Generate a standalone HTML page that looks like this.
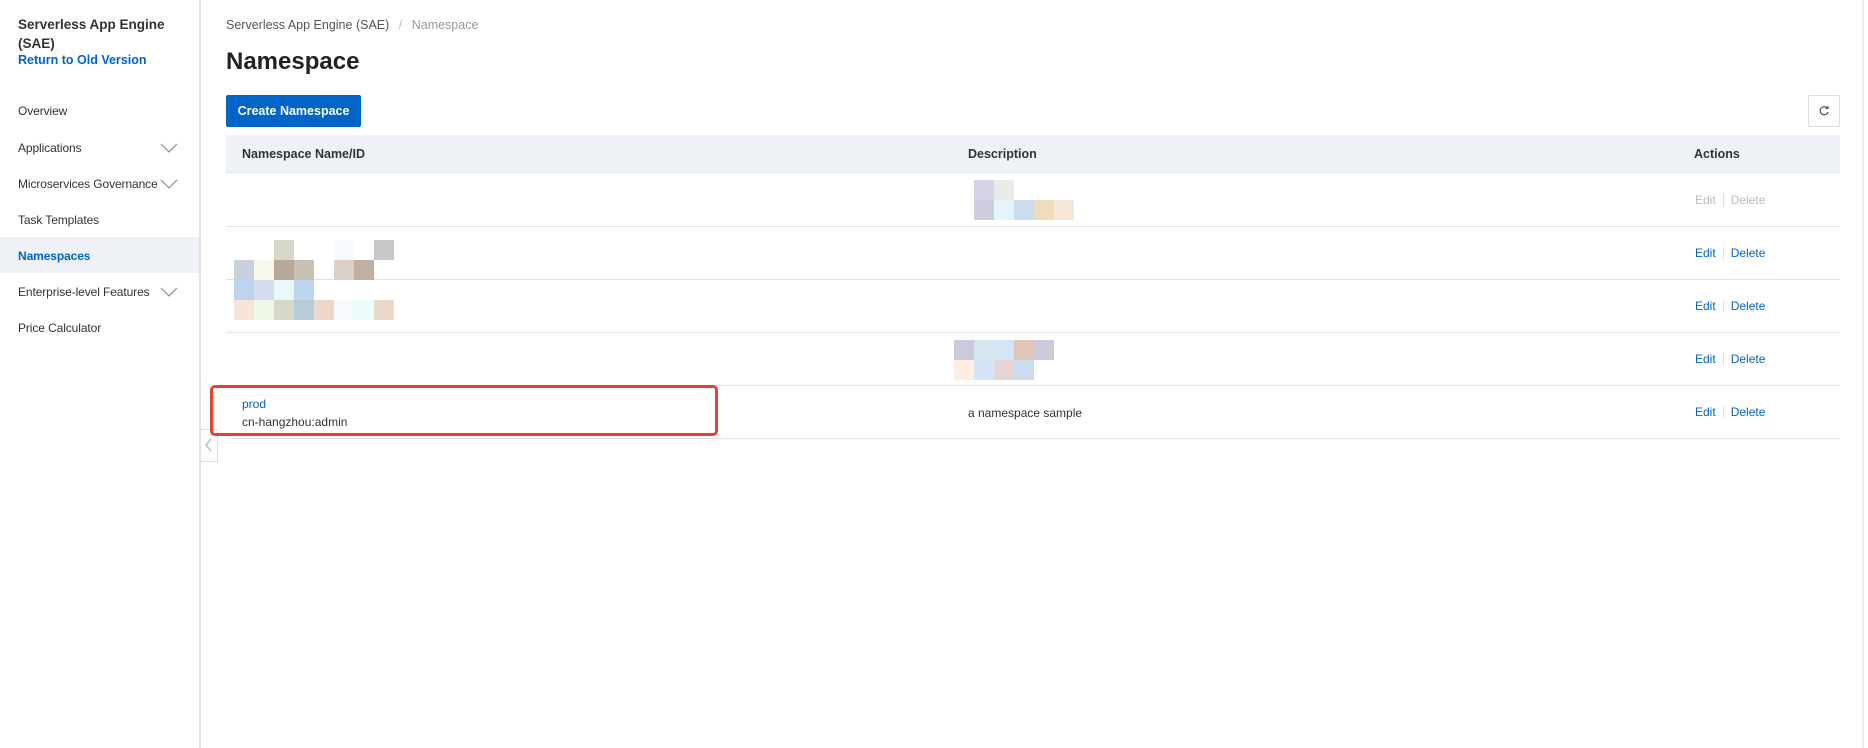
<!DOCTYPE html>
<html><head><meta charset="utf-8"><style>
*{box-sizing:border-box;margin:0;padding:0}
body{width:1868px;height:748px;overflow:hidden;background:#fff;font-family:"Liberation Sans",sans-serif;color:#333;position:relative}
.a{position:absolute;white-space:nowrap}
.side{position:absolute;left:0;top:0;width:201px;height:748px;background:#fff;border-right:2px solid #e3e3e3}
.mi{position:absolute;left:18px;font-size:12px;letter-spacing:-0.1px;color:#333;transform:translateY(-50%)}
.chev{position:absolute;left:160px}
.hl{position:absolute;left:226px;width:1614px;height:1px;background:#e3e3e3}
.act{position:absolute;left:1695px;font-size:12px;color:#0064c8;transform:translateY(-50%)}
.act i{display:inline-block;width:1px;height:12px;background:#ddd;margin:0 7px;vertical-align:-2px}
.b{position:absolute;width:20px;height:20px}
</style></head><body>
<div class="side">
 <div class="a" style="left:18px;top:15px;font-size:13.5px;font-weight:bold;color:#333;line-height:19px">Serverless App Engine<br>(SAE)</div>
 <div class="a" style="left:18px;top:53px;font-size:12.5px;font-weight:bold;color:#0064c8">Return to Old Version</div>
 <div class="mi" style="top:111px">Overview</div>
 <div class="mi" style="top:148px">Applications</div><svg class="chev" style="top:142px" width="18" height="12"><path d="M1 2l8 8 8-8" fill="none" stroke="#999" stroke-width="1.3"/></svg>
 <div class="mi" style="top:184px">Microservices Governance</div><svg class="chev" style="top:178px" width="18" height="12"><path d="M1 2l8 8 8-8" fill="none" stroke="#999" stroke-width="1.3"/></svg>
 <div class="mi" style="top:220px">Task Templates</div>
 <div style="position:absolute;left:0;top:237px;width:199px;height:36px;background:#eef1f6"></div>
 <div class="mi" style="top:256px;color:#0064c8;font-weight:bold">Namespaces</div>
 <div class="mi" style="top:292px">Enterprise-level Features</div><svg class="chev" style="top:286px" width="18" height="12"><path d="M1 2l8 8 8-8" fill="none" stroke="#999" stroke-width="1.3"/></svg>
 <div class="mi" style="top:328px">Price Calculator</div>
</div>
<div style="position:absolute;left:201px;top:429px;width:17px;height:33px;border:1px solid #ddd;border-left:none;background:#fff"></div>
<svg class="a" style="left:205px;top:438px" width="8" height="14"><path d="M6 1L1 7l5 6" fill="none" stroke="#aab" stroke-width="1.2"/></svg>
<div style="position:absolute;left:1862px;top:0;width:2px;height:748px;background:#eee"></div>

<div class="a" style="left:226px;top:18px;font-size:12.5px;color:#555">Serverless App Engine (SAE) <span style="color:#bbb;margin:0 6px">/</span> <span style="color:#999">Namespace</span></div>
<div class="a" style="left:226px;top:48px;font-size:24px;font-weight:bold;color:#222">Namespace</div>
<div style="position:absolute;left:226px;top:95px;width:135px;height:32px;background:#0064c8;border-radius:2px;color:#fff;font-size:12.5px;font-weight:bold;text-align:center;line-height:32px">Create Namespace</div>
<div style="position:absolute;left:1808px;top:95px;width:32px;height:32px;border:1px solid #ddd;border-radius:2px"></div>
<svg class="a" style="left:1817px;top:104px" width="14" height="14" viewBox="0 0 14 14"><path d="M10.5 4.5A4 4 0 1 0 11 8" fill="none" stroke="#555" stroke-width="1.2"/><path d="M8.5 4.5h2.5V2" fill="none" stroke="#555" stroke-width="1.2"/></svg>

<div style="position:absolute;left:226px;top:135px;width:1614px;height:38px;background:#eef1f6;border-bottom:1px solid #e3e3e3"></div>
<div class="a" style="left:242px;top:147px;font-size:12.5px;font-weight:bold;color:#333">Namespace Name/ID</div>
<div class="a" style="left:968px;top:147px;font-size:12.5px;font-weight:bold;color:#333">Description</div>
<div class="a" style="left:1694px;top:147px;font-size:12.5px;font-weight:bold;color:#333">Actions</div>

<div class="hl" style="top:226px"></div><div class="hl" style="top:279px"></div><div class="hl" style="top:332px"></div><div class="hl" style="top:385px"></div><div class="hl" style="top:438px"></div>

<div class="act" style="top:200px;color:#bbb">Edit<i></i>Delete</div>
<div class="act" style="top:253px">Edit<i></i>Delete</div>
<div class="act" style="top:306px">Edit<i></i>Delete</div>
<div class="act" style="top:359px">Edit<i></i>Delete</div>
<div class="act" style="top:412px">Edit<i></i>Delete</div>

<div class="b" style="left:974px;top:180px;background:#d4d4e6"></div><div class="b" style="left:994px;top:180px;background:#e6ece6"></div>
<div class="b" style="left:974px;top:200px;background:#cdcddd"></div><div class="b" style="left:994px;top:200px;background:#e2f4fc"></div><div class="b" style="left:1014px;top:200px;background:#cadcee"></div><div class="b" style="left:1034px;top:200px;background:#eedcbc"></div><div class="b" style="left:1054px;top:200px;background:#f6e8d6"></div>
<div class="b" style="left:954px;top:340px;background:#cacadc"></div><div class="b" style="left:974px;top:340px;background:#d6e6ee"></div><div class="b" style="left:994px;top:340px;background:#d4e6f6"></div><div class="b" style="left:1014px;top:340px;background:#e0c6b6"></div><div class="b" style="left:1034px;top:340px;background:#cacadc"></div>
<div class="b" style="left:954px;top:360px;background:#fdeedf"></div><div class="b" style="left:974px;top:360px;background:#d4e4f6"></div><div class="b" style="left:994px;top:360px;background:#e6d4d4"></div><div class="b" style="left:1014px;top:360px;background:#cadcee"></div>
<div style="position:absolute;left:234px;top:240px">
<div class="b" style="left:40px;top:0;background:#d8d8c8"></div><div class="b" style="left:100px;top:0;background:#f5fafc"></div><div class="b" style="left:140px;top:0;background:#c8c8c8"></div>
<div class="b" style="left:0;top:20px;background:#c8d0e0"></div><div class="b" style="left:20px;top:20px;background:#f8f8ea"></div><div class="b" style="left:40px;top:20px;background:#b8a898"></div><div class="b" style="left:60px;top:20px;background:#c8c0b0"></div><div class="b" style="left:100px;top:20px;background:#ddd0c8"></div><div class="b" style="left:120px;top:20px;background:#c0b0a0"></div>
<div class="b" style="left:0;top:40px;background:#bcd4ee"></div><div class="b" style="left:20px;top:40px;background:#d8dcf0"></div><div class="b" style="left:40px;top:40px;background:#e8fafc"></div><div class="b" style="left:60px;top:40px;background:#bcd4ee"></div>
<div class="b" style="left:0;top:60px;background:#f5e5d8"></div><div class="b" style="left:20px;top:60px;background:#eef8e8"></div><div class="b" style="left:40px;top:60px;background:#d8d8c8"></div><div class="b" style="left:60px;top:60px;background:#b8ccd8"></div><div class="b" style="left:80px;top:60px;background:#ead8c8"></div><div class="b" style="left:100px;top:60px;background:#f5fafc"></div><div class="b" style="left:120px;top:60px;background:#eafcfc"></div><div class="b" style="left:140px;top:60px;background:#ead8c8"></div>
</div>

<div class="a" style="left:242px;top:397px;font-size:12px;color:#0064c8">prod</div>
<div class="a" style="left:242px;top:415px;font-size:12px;color:#333">cn-hangzhou:admin</div>
<div class="a" style="left:968px;top:406px;font-size:12px;color:#333">a namespace sample</div>
<div style="position:absolute;left:210px;top:385px;width:508px;height:51px;border:3px solid #e8402a;border-radius:5px"></div>
</body></html>
